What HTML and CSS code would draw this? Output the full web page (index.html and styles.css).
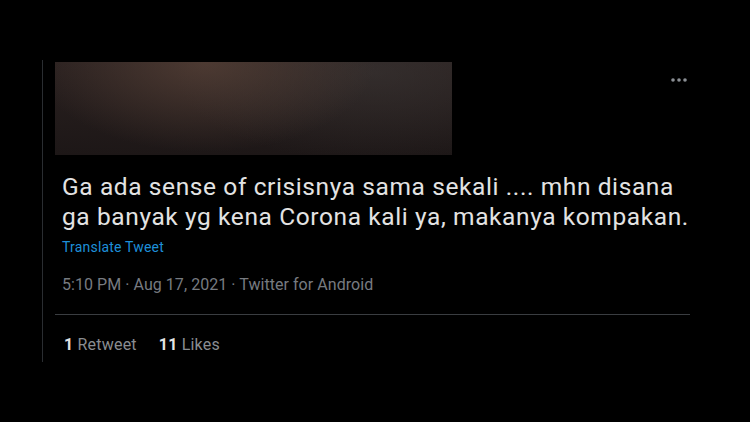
FILE: index.html
```html
<!DOCTYPE html>
<html lang="en">
<head>
	<meta charset="UTF-8">
	<meta name="viewport" content="width=device-width, initial-scale=1.0">
	<title>Tweet</title>
	<link rel="stylesheet" href="styles.css">
</head>
<body>
	<article class="tweet">
		<header class="tweet-head">
			<div class="author-blur"></div>
			<svg class="more" width="20" height="20" viewBox="0 0 20 20">
				<circle cx="4" cy="10" r="1.8"/>
				<circle cx="10" cy="10" r="1.8"/>
				<circle cx="16" cy="10" r="1.8"/>
			</svg>
		</header>
		<div class="tweet-body">
			<p class="tweet-text">Ga ada sense of crisisnya sama sekali .... mhn disana ga banyak yg kena Corona kali ya, makanya kompakan.</p>
			<a class="translate" href="#">Translate Tweet</a>
			<p class="meta">5:10 PM · Aug 17, 2021 · Twitter for Android</p>
		</div>
		<div class="stats">
			<span><b>1</b> Retweet</span>
			<span><b>11</b> Likes</span>
		</div>
	</article>
</body>
</html>
```

FILE: styles.css
```css
body {
	margin: 0;
	background: #000;
	font-family: Roboto, "Liberation Sans", sans-serif;
	color: #e3e3e3;
}

.tweet {
	width: 635px;
	margin: 60px 0 0 42px;
	padding: 2px 0 7px 12px;
	border-left: 1px solid #2a2d31;
}

.tweet-head {
	display: flex;
	justify-content: space-between;
	align-items: flex-start;
}

.author-blur {
	width: 397px;
	height: 93px;
	background:
		radial-gradient(ellipse 170px 90px at 150px 0, rgba(88, 66, 56, .75), transparent),
		radial-gradient(ellipse 200px 90px at 320px 10px, rgba(62, 58, 57, .5), transparent),
		linear-gradient(180deg, #2a2120, #1d1717);
}

.more {
	margin: 8px 1px 0 0;
	fill: #8b8f94;
}

.tweet-body {
	padding: 17px 0 19px 7px;
	border-bottom: 1px solid #3a3d41;
}

.tweet-text {
	margin: 0;
	font-size: 24.5px;
	line-height: 30px;
	letter-spacing: .6px;
}

.translate {
	display: block;
	margin-top: 5px;
	font-size: 14px;
	line-height: 20px;
	letter-spacing: .2px;
	color: #1d8fd8;
	text-decoration: none;
}

.meta {
	margin: 18px 0 0;
	font-size: 16px;
	line-height: 20px;
	letter-spacing: .05px;
	color: #777b80;
}

.stats {
	display: flex;
	gap: 22px;
	padding: 20px 0 0 9px;
	font-size: 16px;
	line-height: 20px;
	letter-spacing: .2px;
	color: #8a8d91;
}

.stats b {
	color: #e3e3e3;
}
```
